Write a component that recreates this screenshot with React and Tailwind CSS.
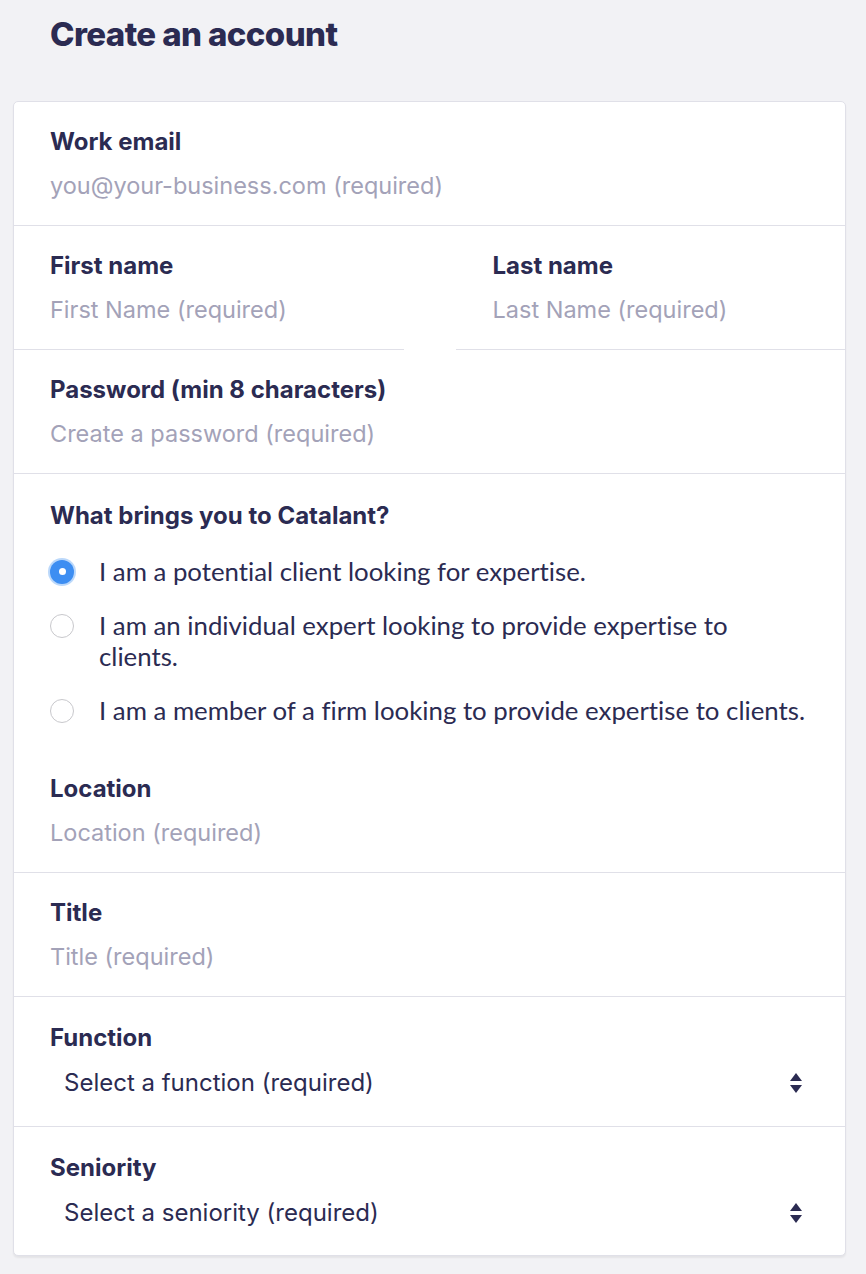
import React from "react";

const ink = "text-[#2b2b52]";
const ph = "text-[#a3a2b8]";
const sans = "font-['Inter',sans-serif]";

function Label({ children }) {
  return <div className={`${ink} ${sans} text-[24px] font-bold leading-[28px]`}>{children}</div>;
}

function Field({ label, placeholder }) {
  return (
    <div>
      <Label>{label}</Label>
      <div className={`${ph} ${sans} mt-[16px] text-[23.5px] leading-[28px]`}>{placeholder}</div>
    </div>
  );
}

function Arrows() {
  return (
    <svg width="14" height="22" viewBox="0 0 14 22" className="text-[#2b2b52]">
      <path d="M7 1 L13 9 H1 Z" fill="currentColor" />
      <path d="M7 21 L13 13 H1 Z" fill="currentColor" />
    </svg>
  );
}

function SelectField({ label, value }) {
  return (
    <div>
      <Label>{label}</Label>
      <div className="mt-[9px] flex h-[44px] items-center justify-between pl-[14px] pr-[6px]">
        <span className={`${ink} ${sans} text-[24px] leading-[28px]`}>{value}</span>
        <Arrows />
      </div>
    </div>
  );
}

function Radio({ checked, children }) {
  return (
    <div className="flex items-start gap-[25px]">
      <div className="flex h-[31px] w-[24px] shrink-0 items-center justify-center">
        {checked ? (
          <div className="flex h-[24px] w-[24px] items-center justify-center rounded-full bg-[#3d8ef2] shadow-[0_0_0_2px_rgba(61,142,242,0.35)]">
            <div className="h-[7px] w-[7px] rounded-full bg-white" />
          </div>
        ) : (
          <div className="h-[24px] w-[24px] rounded-full border-[1.5px] border-[#c8c8cc] bg-white" />
        )}
      </div>
      <div className={`${ink} font-['Lato',sans-serif] text-[25.8px] leading-[31px] [font-variant-ligatures:none]`}>{children}</div>
    </div>
  );
}

export default function App() {
  return (
    <div className="min-h-[1274px] w-[866px] bg-[#f2f2f5] pl-[13px] pr-[20px]">
      <h1 className={`${ink} ${sans} pl-[37px] pt-[14px] text-[33px] font-extrabold leading-[40px] tracking-[-0.6px]`}>
        Create an account
      </h1>
      <div className="mt-[47px] rounded-[5px] border border-[#e0e0e8] bg-white shadow-[0_2px_2px_rgba(0,0,0,0.06)]">
        <div className="border-b border-[#e0e0e8] px-[36px] pb-[25px] pt-[26px]">
          <Field label="Work email" placeholder="you@your-business.com (required)" />
        </div>
        <div className="grid grid-cols-2 gap-[52px]">
          <div className="border-b border-[#e0e0e8] px-[36px] pb-[25px] pt-[26px]">
            <Field label="First name" placeholder="First Name (required)" />
          </div>
          <div className="border-b border-[#e0e0e8] px-[37px] pb-[25px] pt-[26px]">
            <Field label="Last name" placeholder="Last Name (required)" />
          </div>
        </div>
        <div className="border-b border-[#e0e0e8] px-[36px] pb-[25px] pt-[26px]">
          <Field label="Password (min 8 characters)" placeholder="Create a password (required)" />
        </div>
        <div className="border-b border-[#e0e0e8] px-[36px] pb-[25px] pt-[28px]">
          <Label>What brings you to Catalant?</Label>
          <div className="mt-[26px] flex flex-col gap-[23px]">
            <Radio checked>I am a potential client looking for expertise.</Radio>
            <Radio>I am an individual expert looking to provide expertise to clients.</Radio>
            <Radio>I am a member of a firm looking to provide expertise to clients.</Radio>
          </div>
          <div className="mt-[49px]">
            <Field label="Location" placeholder="Location (required)" />
          </div>
        </div>
        <div className="border-b border-[#e0e0e8] px-[36px] pb-[25px] pt-[26px]">
          <Field label="Title" placeholder="Title (required)" />
        </div>
        <div className="border-b border-[#e0e0e8] px-[36px] pb-[21px] pt-[27px]">
          <SelectField label="Function" value="Select a function (required)" />
        </div>
        <div className="px-[36px] pb-[20px] pt-[27px]">
          <SelectField label="Seniority" value="Select a seniority (required)" />
        </div>
      </div>
    </div>
  );
}
